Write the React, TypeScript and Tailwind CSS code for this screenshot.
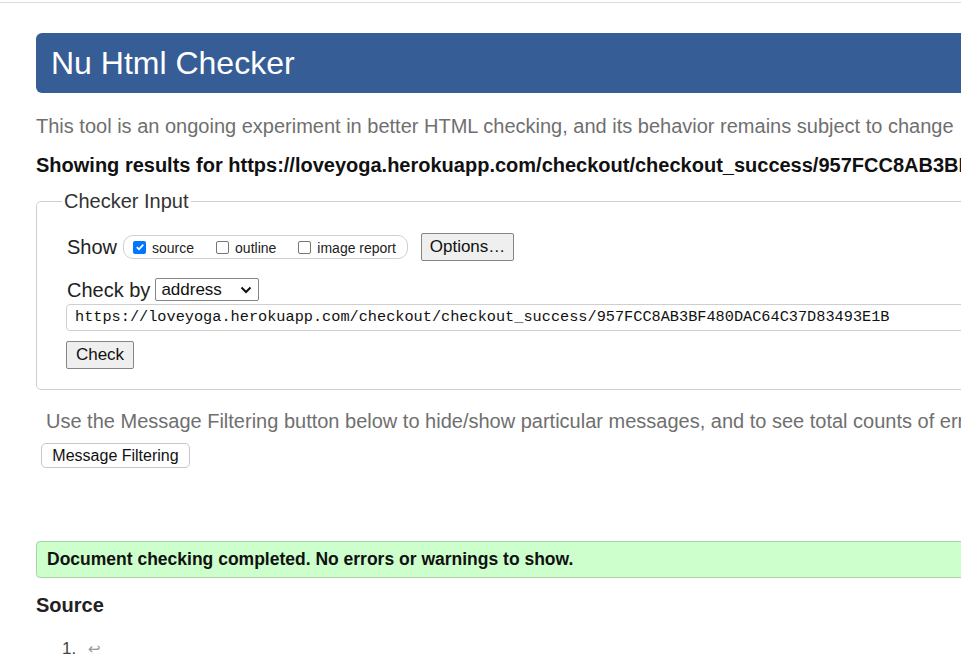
import React from 'react';

const url =
  'https://loveyoga.herokuapp.com/checkout/checkout_success/957FCC8AB3BF480DAC64C37D83493E1B';

const Check: React.FC<{ checked?: boolean; label: string }> = ({ checked, label }) => (
  <label className="flex items-center">
    {checked ? (
      <span className="flex h-[13px] w-[13px] items-center justify-center rounded-[2px] bg-[#0075ff]">
        <svg width="10" height="10" viewBox="0 0 10 10">
          <path d="M1.8 5.2 L4 7.3 L8.3 2.6" fill="none" stroke="#fff" strokeWidth="1.8" />
        </svg>
      </span>
    ) : (
      <span className="h-[13px] w-[13px] rounded-[2px] border border-[#767676] bg-white" />
    )}
    <span className="ml-[6px] mt-[2px] text-[14px] text-[#222]">{label}</span>
  </label>
);

export default function App() {
  return (
    <div
      className="h-[655px] w-[961px] overflow-hidden bg-white text-black"
      style={{ fontFamily: '"Liberation Sans", Arial, sans-serif' }}
    >
      <div className="mt-[2px] border-t border-[#dcdcdc]" />
      <div className="w-[1300px] pl-[36px]">
        {/* header */}
        <h1 className="mt-[30px] flex h-[60px] items-center rounded-[6px] bg-[#365d95] pl-[15px] text-[32px] text-white">
          Nu Html Checker
        </h1>

        <p className="mt-[21px] text-[20px] leading-[24px] text-[#6f6f6f]">
          This tool is an ongoing experiment in better HTML checking, and its behavior remains subject to change
        </p>
        <p className="mt-[15px] text-[20px] font-bold leading-[24px] text-[#111]">
          Showing results for {url}
        </p>

        {/* checker input */}
        <fieldset className="mt-[12px] rounded-[5px] border border-[#cfcfcf] pb-[20px] pl-[30px]">
          <legend className="-ml-[5px] px-[2px] text-[20px] leading-[24px] text-[#333]">Checker Input</legend>

          <div className="mt-[20px] flex h-[28px] items-center">
            <span className="text-[20px] leading-[24px] text-[#222]">Show</span>
            <div className="ml-[6px] flex h-[24px] w-[285px] items-center gap-[22px] rounded-[10px] border border-[#d0d0d0] pl-[9px]">
              <Check checked label="source" />
              <Check label="outline" />
              <Check label="image report" />
            </div>
            <button className="ml-[13px] h-[28px] w-[93px] rounded-[2px] border border-[#858585] bg-[#efefef] text-[17px] text-[#111]">
              Options…
            </button>
          </div>

          <div className="mt-[17px] flex h-[23px] items-center">
            <span className="text-[20px] leading-[24px] text-[#222]">Check by</span>
            <div className="ml-[5px] flex h-[23px] w-[104px] items-center justify-between rounded-[2px] border border-[#858585] pl-[5px] pr-[6px]">
              <span className="text-[17px] text-[#111]">address</span>
              <svg width="12" height="8" viewBox="0 0 12 8">
                <path d="M1.5 1.5 L6 6 L10.5 1.5" fill="none" stroke="#111" strokeWidth="2" />
              </svg>
            </div>
          </div>

          <div
            className="-ml-[1px] mt-[3px] flex h-[27px] items-center rounded-[4px] border border-[#cfcfcf] pl-[8px] text-[15.25px] text-[#111]"
            style={{ fontFamily: '"Liberation Mono", "DejaVu Sans Mono", monospace' }}
          >
            {url}
          </div>

          <button className="-ml-[1px] mt-[10px] block h-[28px] w-[68px] rounded-[2px] border border-[#858585] bg-[#efefef] text-[17px] text-[#111]">
            Check
          </button>
        </fieldset>

        <p className="ml-[10px] mt-[19px] text-[20px] leading-[24px] text-[#6f6f6f]">
          Use the Message Filtering button below to hide/show particular messages, and to see total counts of errors and warnings.
        </p>
        <button className="ml-[5px] mt-[10px] block h-[25px] w-[149px] rounded-[5px] border border-[#c8c8c8] bg-white text-[16px] text-[#111]">
          Message Filtering
        </button>

        {/* result */}
        <div className="mt-[73px] flex h-[37px] items-center rounded-[4px] border border-[#a9d4a9] bg-[#ccffcc] pl-[10px] text-[17.5px] font-bold text-[#111]">
          Document checking completed. No errors or warnings to show.
        </div>

        <h2 className="mt-[15px] text-[20px] font-bold leading-[24px] text-[#222]">Source</h2>
        <ol className="ml-[26px] mt-[20px] flex items-center text-[17px] leading-[24px] text-[#444]">
          <li className="flex items-center">
            <span>1.</span>
            <span className="ml-[12px] text-[15px] text-[#999]">↩</span>
          </li>
        </ol>
      </div>
    </div>
  );
}
